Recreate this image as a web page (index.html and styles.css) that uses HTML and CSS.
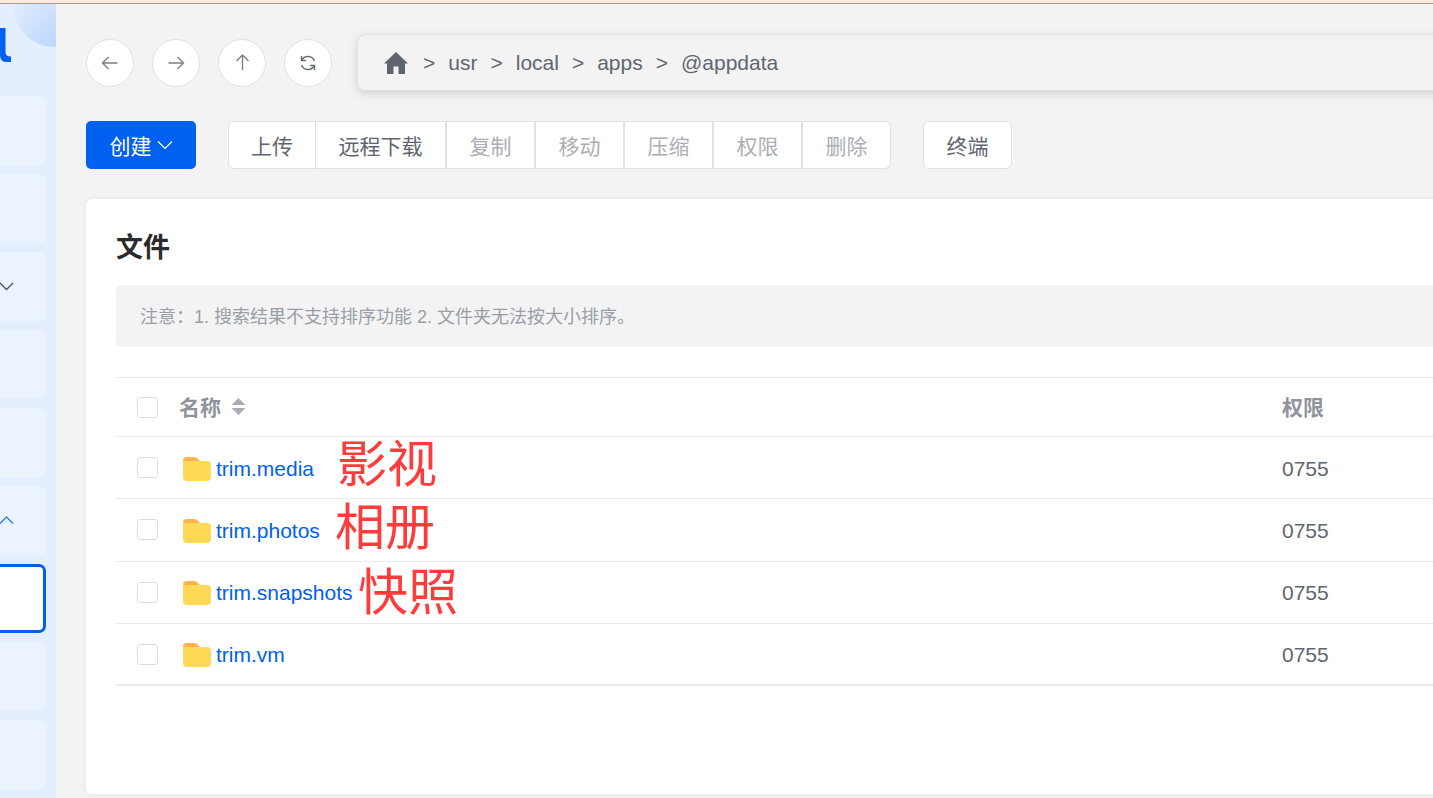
FILE: index.html
```html
<!DOCTYPE html>
<html lang="zh-CN">
<head>
<meta charset="utf-8">
<title>文件</title>
<link rel="stylesheet" href="styles.css">
</head>
<body>
<div class="strip"></div>
<div class="app">
  <aside class="sidebar">
    <div class="orb"></div>
    <svg class="brand" width="12" height="36" viewBox="0 0 12 36"><path d="M0 0h5.500v24c0 3 1.500 4.500 5.500 4.500V34H6C2 34 0 31 0 27z" fill="#0060f0"/></svg>
    <div class="side-card"></div>
    <div class="side-card"></div>
    <div class="side-card"><svg class="chev" width="16" height="10" viewBox="0 0 16 10"><path d="M1 2l6.500 6.500L14 2" fill="none" stroke="#4b5563" stroke-width="1.400"/></svg></div>
    <div class="side-card"></div>
    <div class="side-card"></div>
    <div class="side-card"><svg class="chev" width="16" height="10" viewBox="0 0 16 10"><path d="M1 8.500L7.500 2 14 8.500" fill="none" stroke="#2f7ff0" stroke-width="1.400"/></svg></div>
    <div class="side-card active"></div>
    <div class="side-card"></div>
    <div class="side-card"></div>
  </aside>
  <main class="main">
    <div class="nav">
      <button class="round"><svg width="20" height="20" viewBox="0 0 20 20"><path d="M17.500 10H2.500M8.500 4L2.500 10l6 6" fill="none" stroke="#7b8088" stroke-width="1.400"/></svg></button>
      <button class="round"><svg width="20" height="20" viewBox="0 0 20 20"><path d="M2.500 10h15M11.500 4l6 6-6 6" fill="none" stroke="#7b8088" stroke-width="1.400"/></svg></button>
      <button class="round"><svg width="20" height="20" viewBox="0 0 20 20"><path d="M10.500 17V2M4.500 8l6-6 6 6" fill="none" stroke="#7b8088" stroke-width="1.400"/></svg></button>
      <button class="round"><svg width="20" height="20" viewBox="0 0 20 20"><path d="M3.700 7.300A7 7 0 0 1 16.500 8M16.300 12.700A7 7 0 0 1 3.500 12" fill="none" stroke="#686e78" stroke-width="1.500"/><path d="M3.500 3v4.500H8M16.500 17v-4.500H12" fill="none" stroke="#686e78" stroke-width="1.500"/></svg></button>
      <div class="crumbs">
        <svg class="home" width="26" height="24" viewBox="0 0 26 24"><path d="M13 1L1 12.500h3V23h6.500v-7.500h5V23H22V12.500h3z" fill="#5f6670"/></svg>
        <span>&gt;</span><span>usr</span><span>&gt;</span><span>local</span><span>&gt;</span><span>apps</span><span>&gt;</span><span>@appdata</span>
      </div>
    </div>
    <div class="toolbar">
      <button class="create">创建<svg width="16" height="10" viewBox="0 0 16 10"><path d="M1 1.500l7 7 7-7" fill="none" stroke="#fff" stroke-width="1.200"/></svg></button>
      <div class="group">
        <button class="tool">上传</button>
        <button class="tool wide">远程下载</button>
        <button class="tool off">复制</button>
        <button class="tool off">移动</button>
        <button class="tool off">压缩</button>
        <button class="tool off">权限</button>
        <button class="tool off">删除</button>
      </div>
      <button class="solo">终端</button>
    </div>
    <section class="card">
      <h1 class="title">文件</h1>
      <div class="notice">注意：1. 搜索结果不支持排序功能 2. 文件夹无法按大小排序。</div>
      <div class="table">
        <div class="row head">
          <span class="check"></span>
          <span class="name-head">名称<svg class="sort" width="15" height="19" viewBox="0 0 15 19"><path d="M7.500 1L14.500 8H.5zM7.500 18L.5 11h14z" fill="#a9adb5"/></svg></span>
          <span>权限</span>
        </div>
        <div class="row">
          <span class="check"></span>
          <span class="file"><svg class="folder" width="28" height="24" viewBox="0 0 28 24"><use href="#folder-shape"/></svg><a>trim.media</a></span>
          <span class="perm">0755</span>
        </div>
        <div class="row">
          <span class="check"></span>
          <span class="file"><svg class="folder" width="28" height="24" viewBox="0 0 28 24"><use href="#folder-shape"/></svg><a>trim.photos</a></span>
          <span class="perm">0755</span>
        </div>
        <div class="row">
          <span class="check"></span>
          <span class="file"><svg class="folder" width="28" height="24" viewBox="0 0 28 24"><use href="#folder-shape"/></svg><a>trim.snapshots</a></span>
          <span class="perm">0755</span>
        </div>
        <div class="row last">
          <span class="check"></span>
          <span class="file"><svg class="folder" width="28" height="24" viewBox="0 0 28 24"><use href="#folder-shape"/></svg><a>trim.vm</a></span>
          <span class="perm">0755</span>
        </div>
      </div>
      <span class="note note-a">影视</span>
      <span class="note note-b">相册</span>
      <span class="note note-c">快照</span>
    </section>
  </main>
</div>
<svg class="defs" width="0" height="0">
  <defs>
    <g id="folder-shape">
      <path d="M0 4a4 4 0 0 1 4-4h7c2 0 3 1 4 2l2 2H0z" fill="#ffb24f"/>
      <path d="M0 4h24a4 4 0 0 1 4 4v12a4 4 0 0 1-4 4H4a4 4 0 0 1-4-4z" fill="#ffd955"/>
    </g>
  </defs>
</svg>
</body>
</html>
```
FILE: styles.css
```css
* { box-sizing: border-box; }
html, body { margin: 0; height: 100%; }
body {
  width: 1433px;
  height: 798px;
  overflow: hidden;
  background: #f3f3f3;
  font-family: "Liberation Sans", "Noto Sans CJK SC", sans-serif;
  font-size: 21px;
  color: #5f6670;
}
button { font: inherit; color: inherit; cursor: pointer; padding: 0; }
.defs { position: absolute; }

.strip {
  height: 4px;
  background: #fdeadb;
  border-bottom: 1px solid #a89a94;
}
.app { display: flex; height: 794px; }

.sidebar {
  position: relative;
  flex: 0 0 56px;
  width: 56px;
  overflow: hidden;
  background: #e3eefe;
  display: flex;
  flex-direction: column;
  align-items: flex-end;
  gap: 9px;
  padding: 24px 10px 0 0;
}
.orb {
  position: absolute;
  left: 14px;
  top: -37px;
  width: 80px;
  height: 80px;
  border-radius: 50%;
  background: linear-gradient(135deg, #e3eefe 20%, #b4d0fc 90%);
}
.brand {
  flex: none;
  align-self: flex-start;
  margin-bottom: 23px;
}
.side-card {
  flex: 0 0 69px;
  width: 66px;
  background: #ebf3fe;
  border-radius: 7px;
  display: flex;
  align-items: center;
  justify-content: flex-end;
  padding: 0 31px 1px 0;
}
.side-card.active {
  background: #fff;
  border: 3px solid #0060f0;
}
.chev { flex: none; }

.main {
  flex: 1;
  min-width: 0;
  overflow: hidden;
  padding: 30px 0 0 30px;
}
.nav { display: flex; align-items: center; height: 57px; }
.round {
  flex: none;
  width: 48px;
  height: 48px;
  margin-right: 18px;
  border-radius: 50%;
  background: #fff;
  border: 1px solid #e0e1e8;
  display: flex;
  align-items: center;
  justify-content: center;
}
.round:nth-of-type(4) { margin-right: 25px; }
.crumbs {
  flex: 0 0 1100px;
  height: 57px;
  display: flex;
  align-items: center;
  gap: 13px;
  padding-left: 25px;
  background: #f3f3f4;
  border: 1px solid #e0e1e8;
  border-radius: 8px;
  box-shadow: 0 3px 8px rgba(90, 95, 110, .22);
}
.home { margin-right: 1px; }

.toolbar {
  display: flex;
  align-items: stretch;
  height: 48px;
  margin-top: 30px;
}
.create {
  width: 110px;
  margin-right: 32px;
  border: 0;
  border-radius: 5px;
  background: #0060f0;
  color: #fff;
  display: flex;
  align-items: center;
  justify-content: center;
  gap: 5px;
}
.group { display: flex; margin-right: 32px; }
.tool {
  width: 89px;
  background: #fff;
  border: 1px solid #e0e1e8;
  border-left-width: 0;
  border-right-width: 2px;
}
.tool:first-child { border-left-width: 1px; border-right-width: 1px; border-radius: 6px 0 0 6px; width: 88px; }
.tool:last-child { border-right-width: 1px; border-radius: 0 6px 6px 0; width: 88px; }
.tool.wide { width: 131px; }
.tool.off { color: #abaeb4; }
.solo {
  width: 89px;
  background: #fff;
  border: 1px solid #e0e1e8;
  border-radius: 6px;
}

.card {
  position: relative;
  width: 1380px;
  height: 595px;
  margin-top: 30px;
  padding: 30px;
  background: #fff;
  border-radius: 6px;
  box-shadow: 0 0 4px rgba(214, 222, 240, .7);
}
.title {
  margin: 0;
  font-size: 27px;
  line-height: 38px;
  font-weight: 700;
  color: #2b2b2b;
}
.notice {
  margin-top: 18px;
  height: 62px;
  padding: 0 0 2px 24px;
  display: flex;
  align-items: center;
  background: #f3f3f3;
  border-radius: 6px;
  font-size: 18px;
  color: #999fa8;
}
.table { margin-top: 30px; border-top: 1px solid #ebecf2; }
.row {
  display: grid;
  grid-template-columns: 42px 1103px 1fr;
  align-items: center;
  height: 62.300px;
  padding-left: 21px;
  border-bottom: 1px solid #ebecf2;
}
.row.head { height: 59px; font-weight: 700; color: #909399; }
.row.head span:not(.check) { padding-bottom: 3px; }
.row.last { border-bottom: 2px solid #e9ebf1; }
.check {
  width: 21px;
  height: 21px;
  background: #fff;
  border: 1px solid #dcdee6;
  border-radius: 3px;
}
.name-head { display: flex; align-items: center; gap: 10px; }
.sort { margin-top: 2px; flex: none; }
.file { display: flex; align-items: center; gap: 5px; padding: 2px 0 0 4px; }
.folder { flex: none; }
.file a { color: #0060f0; }
.perm { padding-top: 2px; color: #5f6670; }

.note {
  position: absolute;
  font-size: 50px;
  line-height: 60px;
  color: #ff3b3b;
}
.note-a { left: 251px; top: 236px; }
.note-b { left: 249px; top: 299px; }
.note-c { left: 272px; top: 364px; }
```
